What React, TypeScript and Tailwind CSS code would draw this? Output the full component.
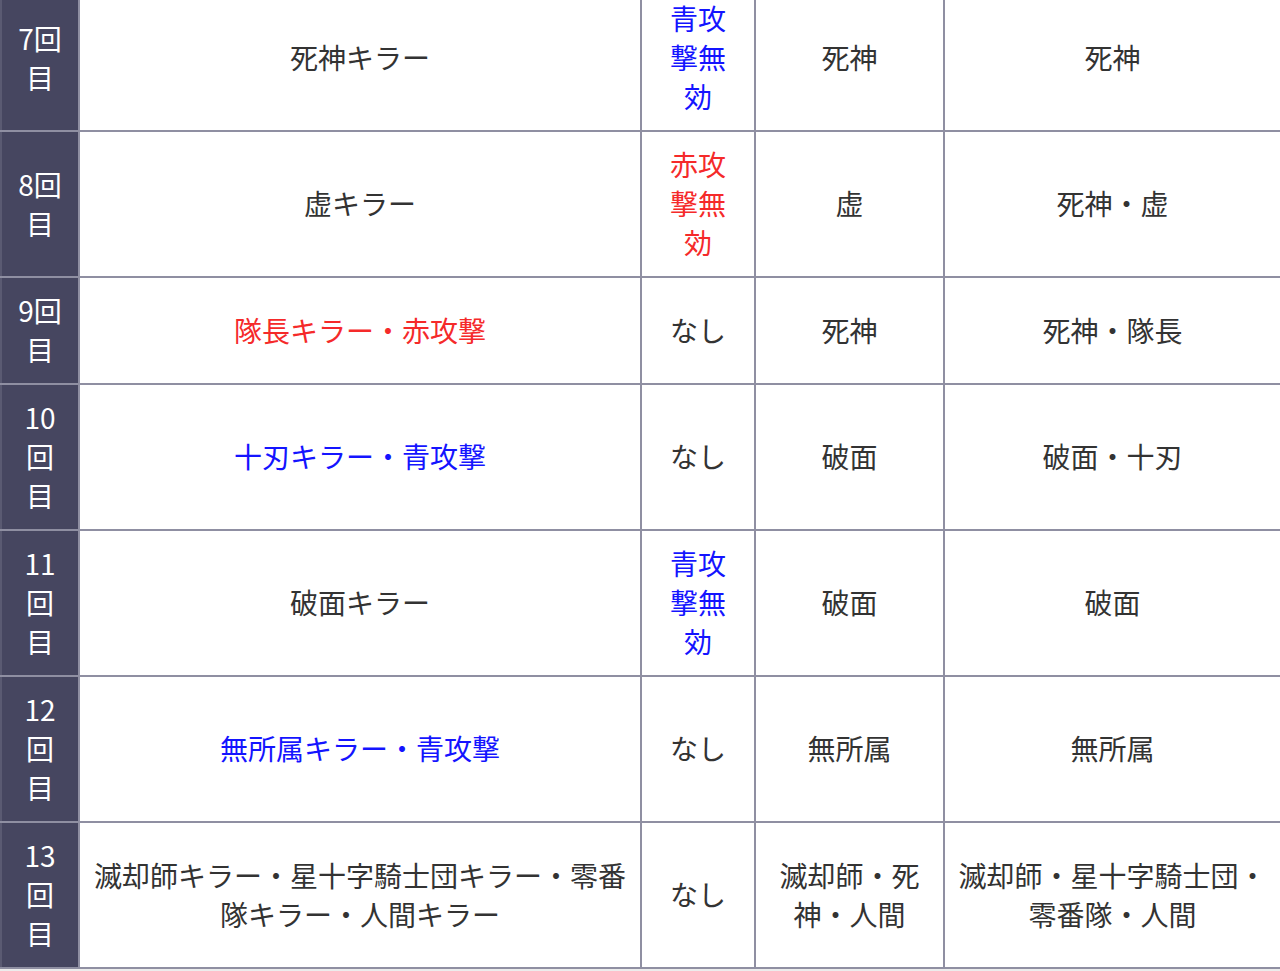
import React from "react"

type Tone = "base" | "blue" | "red"

type Row = {
  no: string
  killer: string
  killerTone: Tone
  guard: string
  guardTone: Tone
  type: string
  target: string
}

const rows: Row[] = [
  { no: "7回目", killer: "死神キラー", killerTone: "base", guard: "青攻撃無効", guardTone: "blue", type: "死神", target: "死神" },
  { no: "8回目", killer: "虚キラー", killerTone: "base", guard: "赤攻撃無効", guardTone: "red", type: "虚", target: "死神・虚" },
  { no: "9回目", killer: "隊長キラー・赤攻撃", killerTone: "red", guard: "なし", guardTone: "base", type: "死神", target: "死神・隊長" },
  { no: "10回目", killer: "十刃キラー・青攻撃", killerTone: "blue", guard: "なし", guardTone: "base", type: "破面", target: "破面・十刃" },
  { no: "11回目", killer: "破面キラー", killerTone: "base", guard: "青攻撃無効", guardTone: "blue", type: "破面", target: "破面" },
  { no: "12回目", killer: "無所属キラー・青攻撃", killerTone: "blue", guard: "なし", guardTone: "base", type: "無所属", target: "無所属" },
  {
    no: "13回目",
    killer: "滅却師キラー・星十字騎士団キラー・零番隊キラー・人間キラー",
    killerTone: "base",
    guard: "なし",
    guardTone: "base",
    type: "滅却師・死神・人間",
    target: "滅却師・星十字騎士団・零番隊・人間",
  },
]

const toneClass: Record<Tone, string> = {
  base: "text-[#333333]",
  blue: "text-[#1414ff]",
  red: "text-[#f52a2a]",
}

const cell = "bg-white flex items-center justify-center text-center pt-[13px] pb-[14px]"

export default function App() {
  return (
    <div className="min-h-screen bg-[#ececec] overflow-hidden [font-family:'Noto_Sans_CJK_JP','Noto_Sans',sans-serif] text-[28px] leading-[39px]">
      <div className="-mt-[14px] bg-[#8f8fa2] pb-[2px] grid grid-cols-[78px_560px_112px_187px_1fr] gap-[2px]">
        {rows.map((r) => (
          <React.Fragment key={r.no}>
            <div className="bg-[#464660] text-white flex items-center justify-center text-center px-[14px] pt-[13px] pb-[14px] border-l-2 border-[#5a5a72]">
              {r.no}
            </div>
            <div className={`${cell} px-[12px] ${toneClass[r.killerTone]}`}>{r.killer}</div>
            <div className={`${cell} px-[15px] ${toneClass[r.guardTone]}`}>{r.guard}</div>
            <div className={`${cell} px-[16px] text-[#333333]`}>{r.type}</div>
            <div className={`${cell} px-[12px] text-[#333333]`}>{r.target}</div>
          </React.Fragment>
        ))}
      </div>
    </div>
  )
}
